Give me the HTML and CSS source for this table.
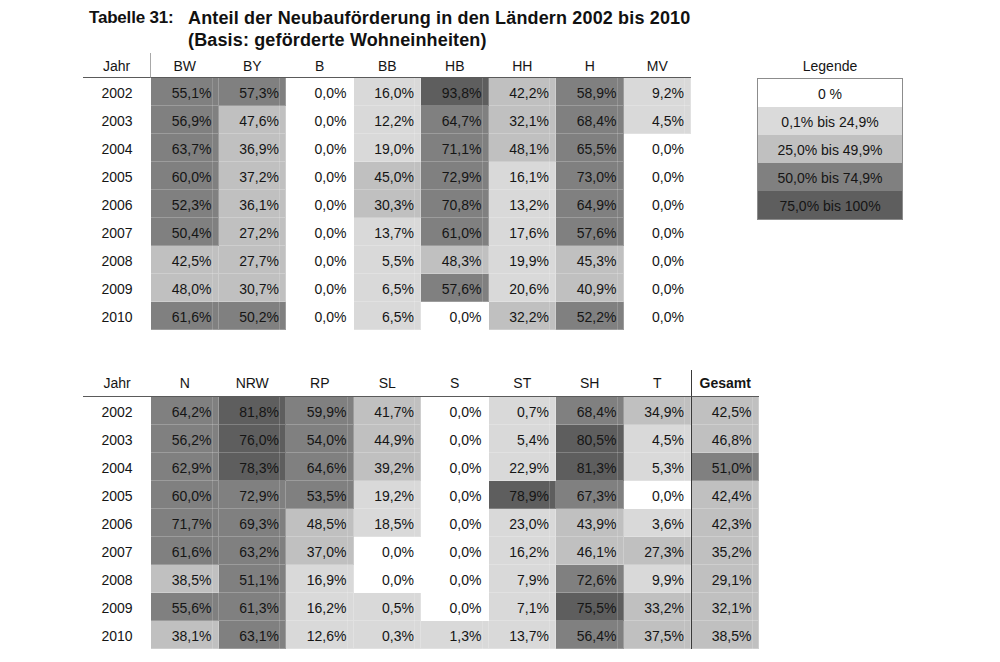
FILE: index.html
```html
<!DOCTYPE html>
<html lang="de">
<head>
<meta charset="utf-8">
<title>Tabelle 31</title>
<link rel="stylesheet" href="styles.css">
</head>
<body>
<div class="page">
  <h1 class="title"><span class="num">Tabelle 31:</span><span class="txt">Anteil der Neubauförderung in den Ländern 2002 bis 2010<br>(Basis: geförderte Wohneinheiten)</span></h1>

  <div class="top">
    <div class="grid t1">
      <div class="h j1">Jahr</div><div class="h">BW</div><div class="h">BY</div><div class="h">B</div><div class="h">BB</div><div class="h">HB</div><div class="h">HH</div><div class="h">H</div><div class="h">MV</div>

      <div class="y">2002</div><div class="d c3">55,1%</div><div class="d c3">57,3%</div><div class="d c0">0,0%</div><div class="d c1">16,0%</div><div class="d c4">93,8%</div><div class="d c2">42,2%</div><div class="d c3">58,9%</div><div class="d c1">9,2%</div>
      <div class="y">2003</div><div class="d c3">56,9%</div><div class="d c2">47,6%</div><div class="d c0">0,0%</div><div class="d c1">12,2%</div><div class="d c3">64,7%</div><div class="d c2">32,1%</div><div class="d c3">68,4%</div><div class="d c1">4,5%</div>
      <div class="y">2004</div><div class="d c3">63,7%</div><div class="d c2">36,9%</div><div class="d c0">0,0%</div><div class="d c1">19,0%</div><div class="d c3">71,1%</div><div class="d c2">48,1%</div><div class="d c3">65,5%</div><div class="d c0">0,0%</div>
      <div class="y">2005</div><div class="d c3">60,0%</div><div class="d c2">37,2%</div><div class="d c0">0,0%</div><div class="d c2">45,0%</div><div class="d c3">72,9%</div><div class="d c1">16,1%</div><div class="d c3">73,0%</div><div class="d c0">0,0%</div>
      <div class="y">2006</div><div class="d c3">52,3%</div><div class="d c2">36,1%</div><div class="d c0">0,0%</div><div class="d c2">30,3%</div><div class="d c3">70,8%</div><div class="d c1">13,2%</div><div class="d c3">64,9%</div><div class="d c0">0,0%</div>
      <div class="y">2007</div><div class="d c3">50,4%</div><div class="d c2">27,2%</div><div class="d c0">0,0%</div><div class="d c1">13,7%</div><div class="d c3">61,0%</div><div class="d c1">17,6%</div><div class="d c3">57,6%</div><div class="d c0">0,0%</div>
      <div class="y">2008</div><div class="d c2">42,5%</div><div class="d c2">27,7%</div><div class="d c0">0,0%</div><div class="d c1">5,5%</div><div class="d c2">48,3%</div><div class="d c1">19,9%</div><div class="d c2">45,3%</div><div class="d c0">0,0%</div>
      <div class="y">2009</div><div class="d c2">48,0%</div><div class="d c2">30,7%</div><div class="d c0">0,0%</div><div class="d c1">6,5%</div><div class="d c3">57,6%</div><div class="d c1">20,6%</div><div class="d c2">40,9%</div><div class="d c0">0,0%</div>
      <div class="y">2010</div><div class="d c3">61,6%</div><div class="d c3">50,2%</div><div class="d c0">0,0%</div><div class="d c1">6,5%</div><div class="d c0">0,0%</div><div class="d c2">32,2%</div><div class="d c3">52,2%</div><div class="d c0">0,0%</div>
    </div>

    <div class="legend">
      <div class="lh">Legende</div>
      <div class="lbox">
        <div class="lr c0">0 %</div>
        <div class="lr l1">0,1% bis 24,9%</div>
        <div class="lr l2">25,0% bis 49,9%</div>
        <div class="lr l3">50,0% bis 74,9%</div>
        <div class="lr l4">75,0% bis 100%</div>
      </div>
    </div>
  </div>

  <div class="grid t2">
    <div class="h">Jahr</div><div class="h">N</div><div class="h">NRW</div><div class="h">RP</div><div class="h">SL</div><div class="h">S</div><div class="h">ST</div><div class="h">SH</div><div class="h">T</div><div class="h g gh">Gesamt</div>

    <div class="y">2002</div><div class="d c3">64,2%</div><div class="d c4">81,8%</div><div class="d c3">59,9%</div><div class="d c2">41,7%</div><div class="d c0">0,0%</div><div class="d c1">0,7%</div><div class="d c3">68,4%</div><div class="d c2">34,9%</div><div class="d g c2">42,5%</div>
    <div class="y">2003</div><div class="d c3">56,2%</div><div class="d c4">76,0%</div><div class="d c3">54,0%</div><div class="d c2">44,9%</div><div class="d c0">0,0%</div><div class="d c1">5,4%</div><div class="d c4">80,5%</div><div class="d c1">4,5%</div><div class="d g c2">46,8%</div>
    <div class="y">2004</div><div class="d c3">62,9%</div><div class="d c4">78,3%</div><div class="d c3">64,6%</div><div class="d c2">39,2%</div><div class="d c0">0,0%</div><div class="d c1">22,9%</div><div class="d c4">81,3%</div><div class="d c1">5,3%</div><div class="d g c3">51,0%</div>
    <div class="y">2005</div><div class="d c3">60,0%</div><div class="d c3">72,9%</div><div class="d c3">53,5%</div><div class="d c1">19,2%</div><div class="d c0">0,0%</div><div class="d c4">78,9%</div><div class="d c3">67,3%</div><div class="d c0">0,0%</div><div class="d g c2">42,4%</div>
    <div class="y">2006</div><div class="d c3">71,7%</div><div class="d c3">69,3%</div><div class="d c2">48,5%</div><div class="d c1">18,5%</div><div class="d c0">0,0%</div><div class="d c1">23,0%</div><div class="d c2">43,9%</div><div class="d c1">3,6%</div><div class="d g c2">42,3%</div>
    <div class="y">2007</div><div class="d c3">61,6%</div><div class="d c3">63,2%</div><div class="d c2">37,0%</div><div class="d c0">0,0%</div><div class="d c0">0,0%</div><div class="d c1">16,2%</div><div class="d c2">46,1%</div><div class="d c2">27,3%</div><div class="d g c2">35,2%</div>
    <div class="y">2008</div><div class="d c2">38,5%</div><div class="d c3">51,1%</div><div class="d c1">16,9%</div><div class="d c0">0,0%</div><div class="d c0">0,0%</div><div class="d c1">7,9%</div><div class="d c3">72,6%</div><div class="d c1">9,9%</div><div class="d g c2">29,1%</div>
    <div class="y">2009</div><div class="d c3">55,6%</div><div class="d c3">61,3%</div><div class="d c1">16,2%</div><div class="d c1">0,5%</div><div class="d c0">0,0%</div><div class="d c1">7,1%</div><div class="d c4">75,5%</div><div class="d c2">33,2%</div><div class="d g c2">32,1%</div>
    <div class="y">2010</div><div class="d c2">38,1%</div><div class="d c3">63,1%</div><div class="d c1">12,6%</div><div class="d c1">0,3%</div><div class="d c1">1,3%</div><div class="d c1">13,7%</div><div class="d c3">56,4%</div><div class="d c2">37,5%</div><div class="d g c2">38,5%</div>
  </div>
</div>
</body>
</html>
```

FILE: styles.css
```css
* { box-sizing: border-box; }

body {
  margin: 0;
  background: #ffffff;
  font-family: "Liberation Sans", Arial, sans-serif;
  color: #151515;
}

.page {
  padding: 7px 0 0 83px;
}

.title {
  margin: 0 0 2px 6px;
  display: flex;
  font-size: 18px;
  font-weight: bold;
  line-height: 22px;
  letter-spacing: 0.15px;
  color: #111111;
}

.title .num {
  flex: none;
  width: 99px;
  font-size: 17px;
  letter-spacing: -0.2px;
}

.top {
  display: flex;
  gap: 66px;
}

.grid {
  display: grid;
  font-size: 14px;
}

.t1 {
  grid-template-columns: 68px repeat(8, 67.5px);
}

.t2 {
  grid-template-columns: 68px repeat(9, 67.5px);
  margin-top: 40px;
}

.h {
  text-align: center;
  border-bottom: 1px solid #5a5a5a;
}

.t1 .h {
  height: 25px;
  padding-top: 3px;
  line-height: 21px;
}

.t2 .h {
  height: 27px;
  padding-top: 1px;
  line-height: 25px;
}

.j1 {
  border-right: 1px solid #a8a8a8;
}

.gh {
  font-weight: bold;
}

.y,
.d {
  height: 28px;
  padding-top: 3px;
  line-height: 25px;
}

.y {
  text-align: center;
}

.d {
  text-align: right;
  padding-right: 7px;
}

.g {
  border-left: 1px solid #3a3a3a;
}

.c0 { background-color: #ffffff; }
.c1 { background-color: #d9d9d9; }
.c2 { background-color: #c0c0c0; }
.c3 { background-color: #808080; }
.c4 { background-color: #5e5e5e; }

.c1, .c2, .c3, .c4 {
  box-shadow: inset -1px -1px 0 rgba(255, 255, 255, 0.22);
  background-image: linear-gradient(to left, transparent 6px, rgba(255, 255, 255, 0.16) 6px, rgba(255, 255, 255, 0.16) 7px, transparent 7px);
}

.legend {
  width: 146px;
  font-size: 14px;
}

.lh {
  height: 25px;
  padding-top: 3px;
  line-height: 21px;
  text-align: center;
}

.lbox {
  border: 1px solid #8c8c8c;
}

.lr {
  height: 28px;
  padding-top: 2px;
  line-height: 26px;
  text-align: center;
}

.l1 { background-color: #dadada; }
.l2 { background-color: #c0c0c0; }
.l3 { background-color: #808080; }
.l4 { background-color: #5e5e5e; }
```
